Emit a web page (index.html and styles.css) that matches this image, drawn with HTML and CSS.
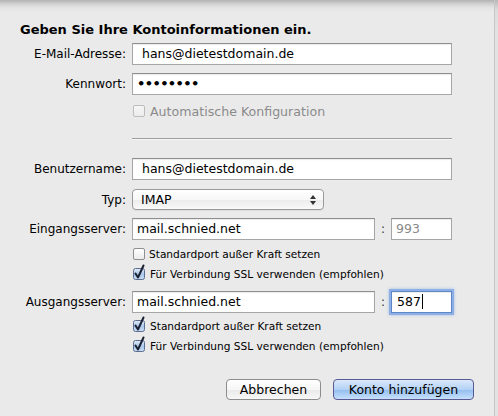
FILE: index.html
```html
<!DOCTYPE html>
<html lang="de">
<head>
<meta charset="utf-8">
<title>Konto hinzufügen</title>
<link rel="stylesheet" href="styles.css">
</head>
<body>
<div class="window">
  <div class="sheet">
    <h1 class="title">Geben Sie Ihre Kontoinformationen ein.</h1>

    <div class="row r-email">
      <span class="lbl">E-Mail-Adresse:</span>
      <div class="field wide pad8">hans@dietestdomain.de</div>
    </div>
    <div class="row r-pass">
      <span class="lbl">Kennwort:</span>
      <div class="field wide pad4 dots">••••••••</div>
    </div>
    <div class="row r-auto">
      <span class="lbl"></span>
      <span class="cb disabled"></span>
      <span class="cbtext gray">Automatische Konfiguration</span>
    </div>
    <div class="row r-sep">
      <span class="lbl"></span>
      <div class="sep"></div>
    </div>
    <div class="row r-user">
      <span class="lbl">Benutzername:</span>
      <div class="field wide pad8">hans@dietestdomain.de</div>
    </div>
    <div class="row r-type">
      <span class="lbl">Typ:</span>
      <div class="popup">
        <span class="popup-val">IMAP</span>
        <svg class="arrows" width="8" height="12" viewBox="0 0 8 12"><path d="M4 1 L7 5 L1 5 Z" fill="#333"/><path d="M4 11 L7 7 L1 7 Z" fill="#333"/></svg>
      </div>
    </div>
    <div class="row r-in">
      <span class="lbl">Eingangsserver:</span>
      <div class="field server pad4">mail.schnied.net</div>
      <span class="colon">:</span>
      <div class="field port pad4 gray">993</div>
    </div>
    <div class="row r-cb1">
      <span class="lbl"></span>
      <span class="cb"></span>
      <span class="cbtext">Standardport außer Kraft setzen</span>
    </div>
    <div class="row r-cb2">
      <span class="lbl"></span>
      <svg class="cbx" width="14" height="16" viewBox="0 0 14 16"><defs><linearGradient id="g1" x1="0" y1="0" x2="0" y2="1"><stop offset="0" stop-color="#e3edf9"/><stop offset="0.5" stop-color="#a9c6ea"/><stop offset="1" stop-color="#c9dcf4"/></linearGradient></defs><rect x="1.5" y="4.5" width="11" height="11" rx="2" fill="url(#g1)" stroke="#5d6f8f"/><path d="M3.5 9.5 L6 13.5 L11.5 1.5" fill="none" stroke="#1c2233" stroke-width="2" stroke-linecap="round" stroke-linejoin="round"/></svg>
      <span class="cbtext">Für Verbindung SSL verwenden (empfohlen)</span>
    </div>
    <div class="row r-out">
      <span class="lbl">Ausgangsserver:</span>
      <div class="field server pad4">mail.schnied.net</div>
      <span class="colon">:</span>
      <div class="field port pad4 focus">587<span class="caret"></span></div>
    </div>
    <div class="row r-cb3">
      <span class="lbl"></span>
      <svg class="cbx" width="14" height="16" viewBox="0 0 14 16"><rect x="1.5" y="4.5" width="11" height="11" rx="2" fill="url(#g1)" stroke="#5d6f8f"/><path d="M3.5 9.5 L6 13.5 L11.5 1.5" fill="none" stroke="#1c2233" stroke-width="2" stroke-linecap="round" stroke-linejoin="round"/></svg>
      <span class="cbtext">Standardport außer Kraft setzen</span>
    </div>
    <div class="row r-cb4">
      <span class="lbl"></span>
      <svg class="cbx" width="14" height="16" viewBox="0 0 14 16"><rect x="1.5" y="4.5" width="11" height="11" rx="2" fill="url(#g1)" stroke="#5d6f8f"/><path d="M3.5 9.5 L6 13.5 L11.5 1.5" fill="none" stroke="#1c2233" stroke-width="2" stroke-linecap="round" stroke-linejoin="round"/></svg>
      <span class="cbtext">Für Verbindung SSL verwenden (empfohlen)</span>
    </div>

    <div class="buttons">
      <button class="btn cancel">Abbrechen</button>
      <button class="btn primary">Konto hinzufügen</button>
    </div>
  </div>
  <div class="edge"></div>
</div>
</body>
</html>
```

FILE: styles.css
```css
html, body {
  margin: 0;
  padding: 0;
}
body {
  width: 498px;
  height: 416px;
  overflow: hidden;
  font-family: "DejaVu Sans", "Liberation Sans", sans-serif;
  font-size: 12px;
  color: #000;
  background: #e9e9e9;
}
.window {
  display: flex;
  height: 416px;
  background: linear-gradient(to bottom, #b2b2b2 0, #d2d2d2 4px, #e4e4e4 8px, #eaeaea 12px);
}
.sheet {
  width: 494px;
  flex: none;
  display: flex;
  flex-direction: column;
}
.edge {
  flex: 1;
  border-left: 1px solid #c6c6c6;
  background: linear-gradient(to bottom, #b8b8b8 0, #dcdcdc 10px, #e2e2e2 30px);
}
.title {
  margin: 21px 0 0 20px;
  font-size: 13px;
  font-weight: bold;
  line-height: 18px;
  height: 18px;
}
.row {
  display: flex;
  align-items: center;
}
.lbl {
  width: 126px;
  flex: none;
  text-align: right;
  margin-right: 6px;
  white-space: nowrap;
}
.field {
  box-sizing: border-box;
  height: 22px;
  line-height: 20px;
  border: 1px solid #a6a6a6;
  border-top-color: #8e8e8e;
  background: #fff;
  box-shadow: inset 0 1px 1px rgba(0,0,0,0.08);
  font-size: 12.5px;
  white-space: nowrap;
}
.wide { width: 320px; }
.server { width: 243px; }
.port { width: 61px; }
.pad8 { padding-left: 9px; }
.pad4 { padding-left: 4px; }
.dots { font-size: 13px; letter-spacing: -0.6px; font-weight: bold; }
.gray { color: #8a8a8a; }
.colon {
  width: 16px;
  text-align: center;
  color: #333;
}
.focus {
  border-color: #5f86c6;
  box-shadow: 0 0 0 2px #8cb0e6, 0 0 3px 2px rgba(120,160,225,0.6), inset 0 1px 1px rgba(0,0,0,0.08);
  padding-left: 5px;
}
.caret {
  display: inline-block;
  width: 1px;
  height: 15px;
  background: #000;
  vertical-align: -3px;
  margin-left: 1px;
}
.r-email { margin-top: 4px; }
.r-pass { margin-top: 8px; }
.r-auto { margin-top: 8px; height: 16px; }
.r-sep { margin-top: 19px; }
.r-user { margin-top: 19px; }
.r-type { margin-top: 9px; }
.r-in { margin-top: 8px; }
.r-cb1 { margin-top: 6px; height: 16px; }
.r-cb2 { margin-top: 4px; height: 16px; }
.r-out { margin-top: 9px; }
.r-cb3 { margin-top: 5px; height: 16px; }
.r-cb4 { margin-top: 4px; height: 16px; }
.sep {
  width: 320px;
  height: 1px;
  background: #9d9d9d;
  box-shadow: 0 1px 0 #f6f6f6;
}
.cb {
  box-sizing: border-box;
  width: 12px;
  height: 12px;
  margin-left: 1px;
  border: 1px solid #8f8f8f;
  border-radius: 2px;
  background: linear-gradient(to bottom, #ffffff, #ececec);
  flex: none;
}
.cb.disabled {
  border-color: #bdbdbd;
  background: linear-gradient(to bottom, #f6f6f6, #ececec);
}
.cbx {
  flex: none;
  margin-top: -4px;
}
.cbtext {
  margin-left: 4px;
  font-size: 10.6px;
  white-space: nowrap;
}
.r-auto .cbtext {
  margin-left: 5px;
  font-size: 12.6px;
}
.popup {
  box-sizing: border-box;
  width: 192px;
  height: 21px;
  display: flex;
  align-items: center;
  justify-content: space-between;
  padding: 0 6px 0 8px;
  border: 1px solid #9a9a9a;
  border-radius: 4px;
  background: linear-gradient(to bottom, #ffffff 0, #f7f7f7 50%, #ececec 51%, #f9f9f9 100%);
  box-shadow: 0 1px 0 rgba(0,0,0,0.06);
  font-size: 12.5px;
}
.buttons {
  display: flex;
  justify-content: flex-end;
  gap: 12px;
  margin-top: 25px;
  padding-right: 20px;
}
.btn {
  box-sizing: border-box;
  height: 21px;
  margin: 0;
  padding: 0;
  font-family: "DejaVu Sans", "Liberation Sans", sans-serif;
  font-size: 12.5px;
  color: #000;
  border-radius: 4px;
  line-height: 19px;
}
.cancel {
  width: 95px;
  border: 1px solid #8d8d8d;
  background: linear-gradient(to bottom, #ffffff 0, #f6f6f6 50%, #e9e9e9 51%, #f7f7f7 100%);
}
.primary {
  width: 141px;
  border: 1px solid #5a5a94;
  background: linear-gradient(to bottom, #dbe9fb 0, #b3d1f5 50%, #92bdf0 51%, #c6e0fb 100%);
}
```
